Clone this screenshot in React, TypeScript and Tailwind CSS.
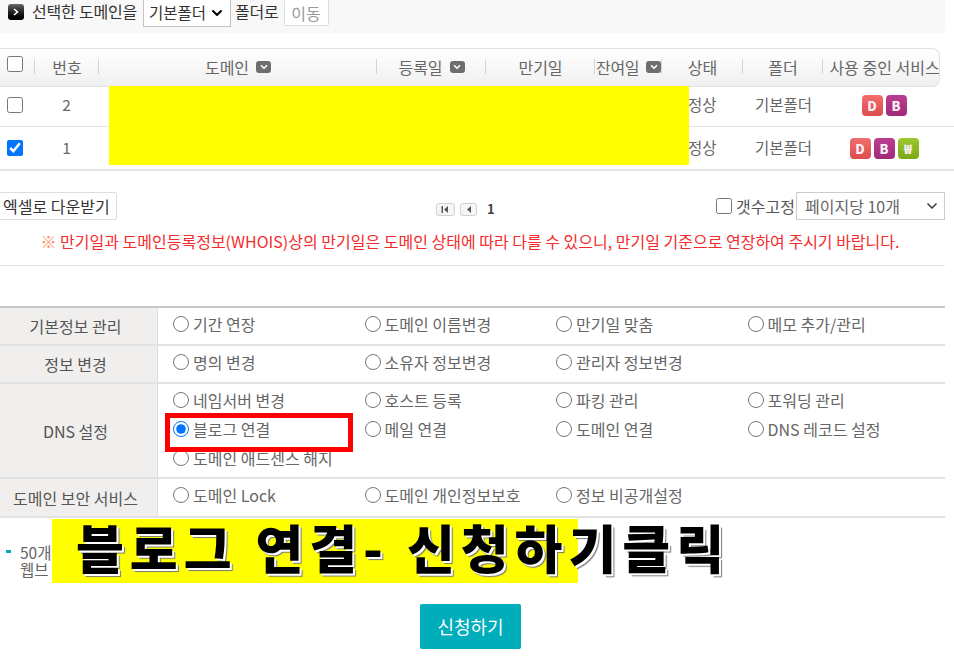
import { ChevronDown } from "lucide-react";

const font = { fontFamily: '"Noto Sans CJK KR", "Noto Sans", sans-serif' };

const columns = "grid grid-cols-[34px_64px_278px_109px_109px_67px_81px_80px_118px] items-center";

const optionRows = [
  { label: "기본정보 관리", height: "h-[38px]", options: ["기간 연장", "도메인 이름변경", "만기일 맞춤", "메모 추가/관리"] },
  { label: "정보 변경", height: "h-[38px]", options: ["명의 변경", "소유자 정보변경", "관리자 정보변경"] },
  {
    label: "DNS 설정",
    height: "h-[95px]",
    options: ["네임서버 변경", "호스트 등록", "파킹 관리", "포워딩 관리", "블로그 연결", "메일 연결", "도메인 연결", "DNS 레코드 설정", "도메인 애드센스 해지"],
  },
  { label: "도메인 보안 서비스", height: "h-[39px]", options: ["도메인 Lock", "도메인 개인정보보호", "정보 비공개설정"] },
];

function SortIcon() {
  return (
    <span className="inline-flex h-[12px] w-[15px] items-center justify-center rounded-[3px] bg-[#6e6e6e]">
      <ChevronDown className="h-[10px] w-[10px] text-white" strokeWidth={4} />
    </span>
  );
}

function HeadCell({ label, sort, tight }: { label: string; sort?: boolean; tight?: boolean }) {
  return (
    <div className="relative flex h-full items-center justify-center gap-[7px] pb-[1px] pl-[2px] last:pl-[7px]">
      <span className="absolute left-0 top-[10px] h-[15px] w-px bg-[#d4d4d4]" />
      <span className={tight ? "whitespace-nowrap tracking-[-0.3px]" : "whitespace-nowrap"}>{label}</span>
      {sort && <SortIcon />}
    </div>
  );
}

function Badge({ letter, color }: { letter: string; color: string }) {
  return (
    <span className={`flex h-[21px] w-[21px] items-center justify-center rounded-[4px] bg-gradient-to-b text-[13px] font-black leading-none text-[#fbeef4] ${color}`}>
      {letter}
    </span>
  );
}

function DomainRow({ no, checked, children, tall }: { no: number; checked?: boolean; children: React.ReactNode; tall?: boolean }) {
  return (
    <div className={`${columns} ${tall ? "h-[44px] border-b-2 border-[#e4e4e4]" : "h-10 border-b border-[#e4e4e4] pb-[3px]"} text-[15.5px] text-[#666]`}>
      <div className="flex pl-[7px]">
        <input type="checkbox" defaultChecked={checked} className="h-4 w-4" />
      </div>
      <div className="pl-[1px] text-center">{no}</div>
      <div className="col-span-4" />
      <div className="pl-[27px]">정상</div>
      <div className="whitespace-nowrap pl-[13px]">기본폴더</div>
      <div className="flex justify-center gap-[3px] pl-[6px]">{children}</div>
    </div>
  );
}

function PagerButton({ first }: { first?: boolean }) {
  return (
    <span className={`flex h-[13px] items-center justify-center rounded-[3px] border border-[#d0d0d0] bg-[#f6f6f6] ${first ? "w-[19px]" : "w-[17px]"}`}>
      <svg width="9" height="7" viewBox="0 0 9 7" className="text-[#555]">
        {first && <rect x="0.5" y="0" width="1.5" height="7" fill="currentColor" />}
        <path d="M7 0v7L3 3.5z" fill="currentColor" />
      </svg>
    </span>
  );
}

function Option({ label, checked }: { label: string; checked?: boolean }) {
  return (
    <label className="flex h-[29px] items-center gap-[4px] whitespace-nowrap text-[16px] text-[#666]">
      <input type="radio" name="service" defaultChecked={checked} className="m-0 h-4 w-4" />
      {label}
    </label>
  );
}

export default function App() {
  return (
    <div className="relative h-[661px] w-[954px] overflow-hidden bg-white text-[#333]" style={font}>
      {/* move to folder */}
      <div className="flex h-[33px] w-[945px] items-start rounded-br bg-[#f8f8f8] pl-2 text-[16px]">
        <span className="mt-[4px] flex h-4 w-4 items-center justify-center rounded-[3px] bg-gradient-to-b from-[#666] to-black">
          <svg width="6" height="8" viewBox="0 0 6 8">
            <path d="M1 1l3.5 3L1 7" fill="none" stroke="#fff" strokeWidth="1.6" />
          </svg>
        </span>
        <span className="ml-[8px] -mt-[1px] whitespace-nowrap tracking-[-0.2px]">선택한 도메인을</span>
        <div className="-mt-px ml-[6px] flex h-[28px] w-[88px] items-center justify-between border border-[#c4c4c4] bg-white pl-[5px] pr-[5px] text-[15.5px]">
          기본폴더
          <ChevronDown className="h-4 w-4 text-black" strokeWidth={3} />
        </div>
        <span className="ml-[4px] -mt-[1px] whitespace-nowrap tracking-[-0.2px]">폴더로</span>
        <span className="-mt-px ml-[5px] flex h-[27px] w-[45px] items-center justify-center rounded-[2px] border border-[#ddd] bg-white text-[#999]">
          이동
        </span>
      </div>

      {/* domain list */}
      <div className={`${columns} mt-[15px] h-[39px] w-[940px] rounded-r-lg border border-l-0 border-[#e2e2e2] bg-gradient-to-b from-white to-[#f0f0f0] text-[16px] text-[#666]`}>
        <div className="flex pb-[8px] pl-[7px]">
          <input type="checkbox" className="h-4 w-4" />
        </div>
        <HeadCell label="번호" />
        <HeadCell label="도메인" sort />
        <HeadCell label="등록일" sort />
        <HeadCell label="만기일" />
        <HeadCell label="잔여일" sort tight />
        <HeadCell label="상태" />
        <HeadCell label="폴더" />
        <HeadCell label="사용 중인 서비스" />
      </div>
      <DomainRow no={2}>
        <Badge letter="D" color="from-[#f26d6d] to-[#dd4c4c]" />
        <Badge letter="B" color="from-[#bb3f90] to-[#a22878]" />
      </DomainRow>
      <DomainRow no={1} checked tall>
        <Badge letter="D" color="from-[#f26d6d] to-[#dd4c4c]" />
        <Badge letter="B" color="from-[#bb3f90] to-[#a22878]" />
        <Badge letter="₩" color="from-[#9cc92c] to-[#7aa814]" />
      </DomainRow>

      {/* paging */}
      <div className="mt-[21px] grid h-[28px] w-[945px] grid-cols-3 items-center">
        <div>
          <span className="-ml-[3px] inline-flex h-[28px] items-center rounded-[2px] border border-[#ddd] pl-[5px] pr-[6px] text-[16px] text-[#333]">
            엑셀로 다운받기
          </span>
        </div>
        <div className="flex items-center gap-[5px] pl-[121px] pt-[6px]">
          <PagerButton first />
          <PagerButton />
          <span className="ml-[5px] text-[13px] font-bold text-[#444]">1</span>
        </div>
        <div className="flex items-center justify-end gap-[4px]">
          <input type="checkbox" className="h-4 w-4" />
          <span className="-mr-[3px] text-[16px] text-[#555]">갯수고정</span>
          <div className="flex h-[28px] w-[149px] items-center justify-between border border-[#ccc] pl-[8px] pr-[4px] text-[16px] text-[#666]">
            페이지당 10개
            <ChevronDown className="h-4 w-4 text-[#444]" strokeWidth={2.5} />
          </div>
        </div>
      </div>
      <p className="mt-[11px] whitespace-nowrap pr-[14px] text-center text-[16px] leading-[20px] text-[#f52b2b]">
        <span className="text-[#ff8a5c]">※</span> 만기일과 도메인등록정보(WHOIS)상의 만기일은 도메인 상태에 따라 다를 수 있으니, 만기일 기준으로 연장하여 주시기 바랍니다.
      </p>
      <div className="mt-[14px] h-px w-[945px] bg-[#e4e4e4]" />

      {/* service options */}
      <div className="mt-[40px] w-[945px] border-t-2 border-[#c8c8c8]">
        {optionRows.map((row) => (
          <div key={row.label} className={`flex border-b-2 border-[#e2e2e2] ${row.height}`}>
            <div className="flex w-[158px] shrink-0 items-center justify-center border-r border-[#dcdcdc] bg-[#f1eeee] pr-[6px] text-[16px] text-[#555]">
              {row.label}
            </div>
            <div className="grid flex-1 grid-cols-[191.5px_191.5px_191.5px_191.5px] content-start pl-[15px] pt-[1px]">
              {row.options.map((option) => (
                <Option key={option} label={option} checked={option === "블로그 연결"} />
              ))}
            </div>
          </div>
        ))}
      </div>

      {/* plan notes, mostly hidden by the banner */}
      <div className="mt-[26px] flex gap-[9px] pl-[6px] text-[15.5px] leading-[17px] text-[#666]">
        <span className="mt-[6px] h-[3px] w-[5px] bg-[#00adbb]" />
        <div className="whitespace-nowrap">
          <div>50개</div>
          <div>웹브</div>
        </div>
      </div>
      <div className="mt-[26px] flex justify-center pr-[13px]">
        <button className="h-[45px] w-[101px] rounded-[2px] bg-[#00adbb] text-[18px] text-white">신청하기</button>
      </div>

      {/* annotations drawn on top of the capture */}
      <div className="absolute left-[109px] top-[86px] h-[79px] w-[580px] bg-[#ffff00]" />
      <div className="absolute left-[165px] top-[413px] h-[39px] w-[188px] border-[5px] border-[#ff0000]" />
      <div className="absolute left-[52px] top-[519px] h-[64px] w-[526px] bg-[#ffff00]" />
      <div className="absolute left-[76px] top-[515px] whitespace-nowrap text-[52px] font-black leading-[64px] tracking-[6px] text-black [text-shadow:2px_2px_0_#fff,3px_3px_1px_#777]">
        블로그 연결- 신청하기클릭
      </div>
    </div>
  );
}
